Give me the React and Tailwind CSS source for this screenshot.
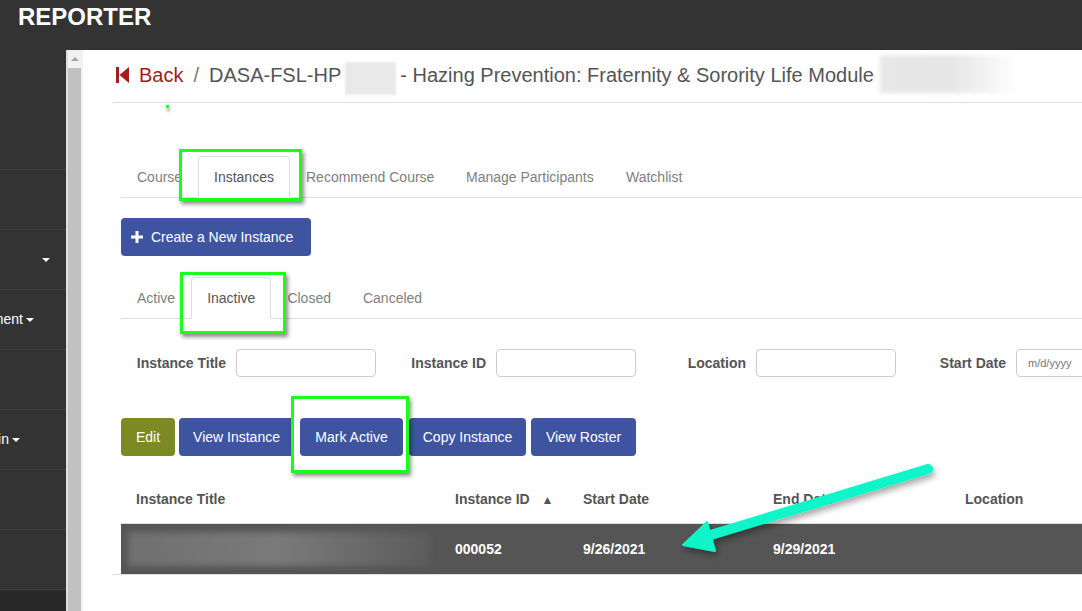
import React from "react";

const tabs = [
  { label: "Course", w: "w-[77px]" },
  { label: "Instances", w: "w-[92px]", active: true },
  { label: "Recommend Course", w: "w-[160px]" },
  { label: "Manage Participants", w: "w-[160px]" },
  { label: "Watchlist", w: "w-[100px]" },
];

const statusTabs = [
  { label: "Active" },
  { label: "Inactive", active: true },
  { label: "Closed" },
  { label: "Canceled" },
];

const filters = ["Instance Title", "Instance ID", "Location", "Start Date"];

const actions = [
  { label: "Edit", cls: "w-[54px] bg-[#7b8a22]" },
  { label: "View Instance", cls: "w-[115px] ml-[4px] bg-[#3f54a0]" },
  { label: "Mark Active", cls: "w-[103px] ml-[6px] bg-[#3f54a0]" },
  { label: "Copy Instance", cls: "w-[117px] ml-[6px] bg-[#3f54a0]" },
  { label: "View Roster", cls: "w-[105px] ml-[5px] bg-[#3f54a0]" },
];

function Caret() {
  return (
    <span className="ml-[3px] inline-block h-0 w-0 border-x-[4px] border-t-[4px] border-x-transparent border-t-white" />
  );
}

function Sidebar() {
  const rows = [
    { text: null },
    { caret: true, pr: "pr-[16px]" },
    { text: "Management", caret: true, pr: "pr-[32px]" },
    { text: null },
    { text: "Admin", caret: true, pr: "pr-[46px]" },
    { text: null },
    { text: null },
  ];
  return (
    <aside className="flex w-[66px] shrink-0 flex-col overflow-hidden bg-[#333]">
      <div className="h-[120px] shrink-0 border-b border-[#3d3d3d]" />
      {rows.map((r, i) => (
        <div
          key={i}
          className={`flex h-[60px] shrink-0 items-center justify-end border-b border-[#3d3d3d] whitespace-nowrap text-[14px] text-white ${r.pr || ""}`}
        >
          {r.text}
          {r.caret && <Caret />}
        </div>
      ))}
      <div className="flex-1 bg-[#292929]" />
    </aside>
  );
}

function Scrollbar() {
  return (
    <div className="flex w-[17px] shrink-0 bg-[#f1f1f1]">
      <div className="w-[2px] bg-[#dedede]" />
      <div className="flex w-[13px] flex-col">
        <div className="flex h-[18px] items-center justify-center bg-[#f1f1f1]">
          <span className="h-0 w-0 border-x-[4px] border-b-[4px] border-x-transparent border-b-[#a3a3a3]" />
        </div>
        <div className="flex-1 bg-[#c1c1c1]" />
      </div>
    </div>
  );
}

function BackIcon() {
  return (
    <svg width="13" height="16" viewBox="0 0 13 16" className="shrink-0">
      <rect x="0" y="0" width="3" height="16" fill="#a31d21" />
      <polygon points="13,0 13,16 3.5,8" fill="#a31d21" />
    </svg>
  );
}

function Breadcrumb() {
  return (
    <div className="flex h-[53px] items-start border-b border-[#dddddd] pt-[11px] pl-[3px] text-[20px] leading-[28px] whitespace-nowrap">
      <div className="flex h-[28px] items-center">
        <BackIcon />
        <span className="ml-[10px] text-[#a31d21]">Back</span>
        <span className="ml-[10px] text-[#777]">/</span>
        <span className="ml-[10px] text-[#555]">DASA-FSL-HP</span>
        <span className="-my-[3px] ml-[4px] inline-block h-[33px] w-[51px] translate-y-[3px] bg-[#e9e9e9] blur-[1px]" />
        <span className="ml-[4px] text-[#555]">
          - Hazing Prevention: Fraternity &amp; Sorority Life Module
        </span>
        <span className="-my-[5px] ml-[6px] inline-block h-[38px] w-[140px] -translate-y-[1px] bg-gradient-to-r from-[#e8e8e8] via-[#e6e6e6] to-transparent blur-[2px]" />
      </div>
    </div>
  );
}

function Tabs({ items, natural }) {
  return (
    <ul className="flex h-[42px] border-b border-[#dddddd] text-[14px] leading-[20px]">
      {items.map((t) => (
        <li
          key={t.label}
          className={`-mb-px flex h-[42px] shrink-0 items-center whitespace-nowrap rounded-t-[4px] border px-[15px] ${
            natural ? "" : t.w
          } ${
            t.active
              ? "border-[#dddddd] border-b-white bg-white text-[#555]"
              : "border-transparent text-[#808080]"
          }`}
        >
          {t.label}
        </li>
      ))}
    </ul>
  );
}

function Filters() {
  return (
    <div className="mt-[30px] flex">
      {filters.map((f, i) => (
        <div
          key={f}
          className="flex w-[260px] shrink-0 items-center justify-end gap-[10px] pr-[5px]"
        >
          <span className="whitespace-nowrap text-[14px] font-bold text-[#555]">
            {f}
          </span>
          <div className="flex h-[28px] w-[140px] shrink-0 items-center rounded-[4px] border border-[#cccccc] bg-white pl-[11px] text-[11px] text-[#777]">
            {i === 3 ? "m/d/yyyy" : ""}
          </div>
        </div>
      ))}
    </div>
  );
}

function Actions() {
  return (
    <div className="mt-[41px] flex">
      {actions.map((a) => (
        <button
          key={a.label}
          className={`h-[38px] shrink-0 rounded-[4px] text-[14px] text-white ${a.cls}`}
        >
          {a.label}
        </button>
      ))}
    </div>
  );
}

function InstanceTable() {
  const cols = ["w-[319px]", "w-[128px]", "w-[190px]", "w-[192px]", "flex-1"];
  return (
    <div className="mt-[20px]">
      <div className="flex h-[48px] items-center border-b border-[#dddddd] text-[14px] font-bold text-[#555] whitespace-nowrap">
        <div className={`${cols[0]} pl-[15px]`}>Instance Title</div>
        <div className={`${cols[1]} pl-[15px]`}>
          Instance ID <span className="ml-[8px] text-[12px]">▲</span>
        </div>
        <div className={`${cols[2]} pl-[15px]`}>Start Date</div>
        <div className={`${cols[3]} pl-[15px]`}>End Date</div>
        <div className={`${cols[4]} pl-[15px]`}>Location</div>
      </div>
      <div className="flex h-[50px] items-center bg-[#555555] text-[14px] font-bold text-white whitespace-nowrap">
        <div className={`${cols[0]} flex h-full items-center pl-[7px]`}>
          <div className="h-[34px] w-[302px] bg-gradient-to-r from-[#707070] via-[#7a7a7a] to-[#5c5c5c] blur-[3px]" />
        </div>
        <div className={`${cols[1]} pl-[15px]`}>000052</div>
        <div className={`${cols[2]} pl-[15px]`}>9/26/2021</div>
        <div className={`${cols[3]} pl-[15px]`}>9/29/2021</div>
        <div className={cols[4]} />
      </div>
    </div>
  );
}

function Callouts() {
  const box =
    "absolute border-[3px] border-[#1cff1c] shadow-[2px_3px_4px_rgba(0,0,0,0.45)]";
  return (
    <div className="pointer-events-none absolute inset-0">
      <div className={`${box} left-[179px] top-[149px] h-[52px] w-[123px]`} />
      <div className={`${box} left-[180px] top-[272px] h-[62px] w-[106px]`} />
      <div className={`${box} left-[291px] top-[396px] h-[77px] w-[118px]`} />
      <div className="absolute left-[166px] top-[105px] h-[3px] w-[3px] bg-[#22ff22] shadow-[1px_3px_3px_rgba(0,0,0,0.4)]" />
      <svg width="1082" height="611" className="absolute inset-0">
        <defs>
          <filter id="arrowShadow" x="-10%" y="-10%" width="130%" height="140%">
            <feDropShadow dx="2" dy="4" stdDeviation="3" floodColor="#000" floodOpacity="0.35" />
          </filter>
        </defs>
        <g filter="url(#arrowShadow)" fill="#0ef5c8" stroke="#0ef5c8">
          <line x1="928" y1="469" x2="704" y2="537" strokeWidth="10" strokeLinecap="round" />
          <polygon points="683,545 707,522 715,551" strokeWidth="2" strokeLinejoin="round" />
        </g>
      </svg>
    </div>
  );
}

export default function App() {
  return (
    <div className="relative flex h-[611px] w-[1082px] flex-col overflow-hidden bg-[#333] font-['Liberation_Sans',Arial,sans-serif]">
      <header className="h-[50px] shrink-0 pl-[18px] pt-[5px] text-[24px] font-bold leading-[24px] text-white">
        REPORTER
      </header>
      <div className="flex flex-1 overflow-hidden">
        <Sidebar />
        <Scrollbar />
        <main className="flex-1 overflow-hidden bg-white">
          <div className="w-[1100px] pl-[30px]">
            <Breadcrumb />
            <div className="pl-[8px]">
              <div className="mt-[53px]">
                <Tabs items={tabs} />
              </div>
              <button className="mt-[20px] flex h-[38px] w-[190px] items-center rounded-[4px] bg-[#3f54a0] pl-[10px] text-[14px] text-white">
                <svg width="12" height="12" viewBox="0 0 12 12" className="mr-[8px]">
                  <rect x="4.5" y="0" width="3" height="12" fill="#fff" />
                  <rect x="0" y="4.5" width="12" height="3" fill="#fff" />
                </svg>
                Create a New Instance
              </button>
              <div className="mt-[21px]">
                <Tabs items={statusTabs} natural />
              </div>
              <Filters />
              <Actions />
              <InstanceTable />
            </div>
            <div className="h-px bg-[#dddddd]" />
          </div>
        </main>
      </div>
      <Callouts />
    </div>
  );
}
